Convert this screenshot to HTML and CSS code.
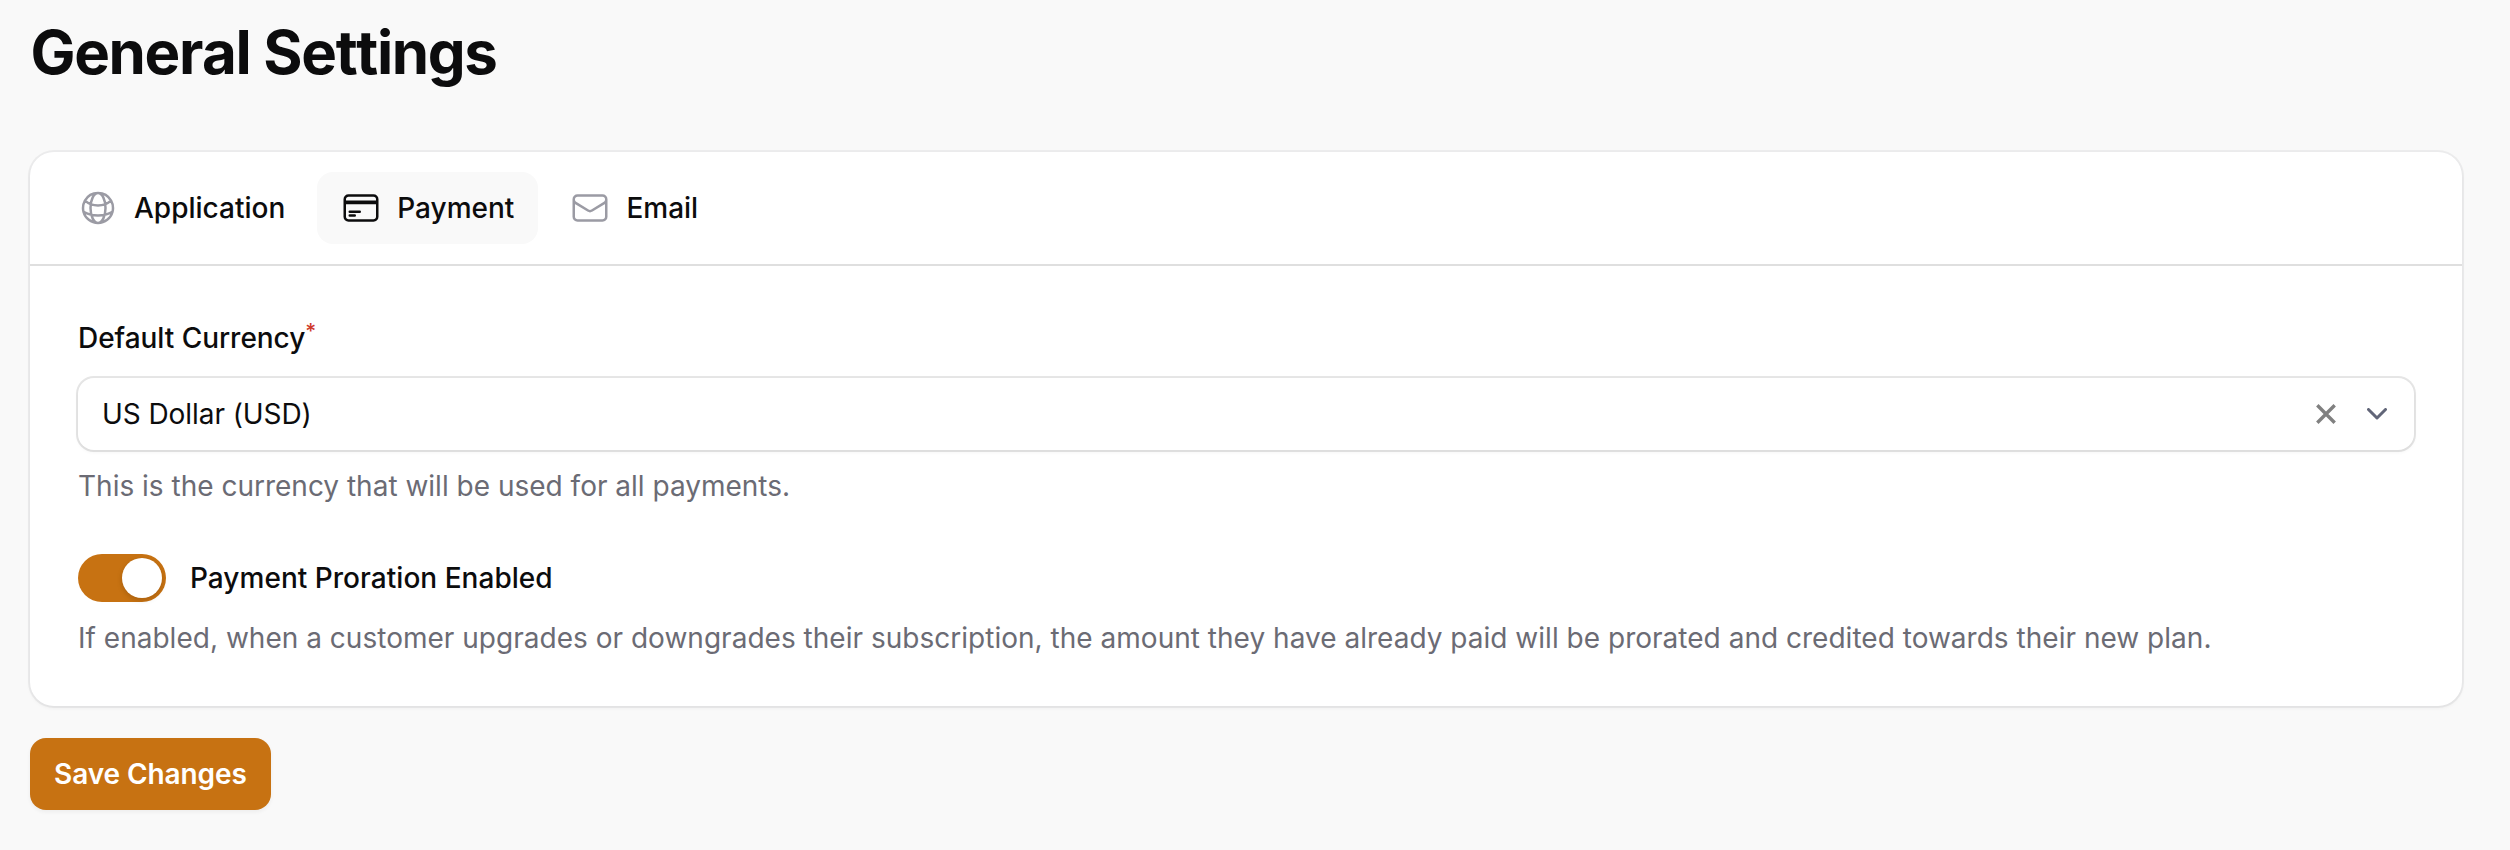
FILE: index.html
```html
<!DOCTYPE html>
<html lang="en">
<head>
<meta charset="utf-8">
<title>General Settings</title>
<link rel="stylesheet" href="styles.css">
</head>
<body>
<main class="page">
  <h1 class="page-title">General Settings</h1>
  <section class="card">
    <nav class="tabs">
      <a class="tab">
        <svg class="tab-icon" viewBox="0 0 24 24"><path d="M12 21a9.004 9.004 0 0 0 8.716-6.747M12 21a9.004 9.004 0 0 1-8.716-6.747M12 21c2.485 0 4.5-4.03 4.5-9S14.485 3 12 3m0 18c-2.485 0-4.5-4.03-4.5-9S9.515 3 12 3m0 0a8.997 8.997 0 0 1 7.843 4.582M12 3a8.997 8.997 0 0 0-7.843 4.582m15.686 0A11.953 11.953 0 0 1 12 10.5c-2.998 0-5.74-1.1-7.843-2.918m15.686 0A8.959 8.959 0 0 1 21 12c0 .778-.099 1.533-.284 2.253m0 0A17.919 17.919 0 0 1 12 16.5c-3.162 0-6.133-.815-8.716-2.247m0 0A9.015 9.015 0 0 1 3 12c0-1.605.42-3.113 1.157-4.418"/></svg>
        <span>Application</span>
      </a>
      <a class="tab tab-active">
        <svg class="tab-icon" viewBox="0 0 24 24"><path d="M2.25 8.25h19.5M2.25 9h19.5m-16.5 5.25h6m-6 2.25h3m-3.75 3h15a2.25 2.25 0 0 0 2.25-2.25V6.75A2.25 2.25 0 0 0 19.5 4.5h-15a2.25 2.25 0 0 0-2.25 2.25v10.5A2.25 2.25 0 0 0 4.5 19.5Z"/></svg>
        <span>Payment</span>
      </a>
      <a class="tab">
        <svg class="tab-icon" viewBox="0 0 24 24"><path d="M21.75 6.75v10.5a2.25 2.25 0 0 1-2.25 2.25h-15a2.25 2.25 0 0 1-2.25-2.25V6.75m19.5 0A2.25 2.25 0 0 0 19.5 4.5h-15a2.25 2.25 0 0 0-2.25 2.25m19.5 0v.243a2.25 2.25 0 0 1-1.07 1.916l-7.5 4.615a2.25 2.25 0 0 1-2.36 0L3.32 8.91a2.25 2.25 0 0 1-1.07-1.916V6.75"/></svg>
        <span>Email</span>
      </a>
    </nav>
    <div class="panel">
      <div class="field">
        <div class="label"><span>Default Currency</span><sup class="required">*</sup></div>
        <div class="select">
          <span class="select-value">US Dollar (USD)</span>
          <svg class="clear" viewBox="0 0 20 20"><path d="M1.3 1.3 18.7 18.7M18.7 1.3 1.3 18.7"/></svg>
          <svg class="chevron" viewBox="0 0 20 12"><path d="M1.5 1.5 10 10l8.500-8.500"/></svg>
        </div>
        <p class="help">This is the currency that will be used for all payments.</p>
      </div>
      <div class="field">
        <div class="toggle-row">
          <span class="toggle"><span class="knob"></span></span>
          <span>Payment Proration Enabled</span>
        </div>
        <p class="help help-long">If enabled, when a customer upgrades or downgrades their subscription, the amount they have already paid will be prorated and credited towards their new plan.</p>
      </div>
    </div>
  </section>
  <button class="save" type="button">Save Changes</button>
</main>
</body>
</html>
```
FILE: styles.css
```css
* { box-sizing: border-box; }
body {
  margin: 0;
  background: #f9f9f9;
  color: #0c0c0d;
  font-family: Inter, "Liberation Sans", sans-serif;
  font-size: 28px;
  line-height: 40px;
}
.page {
  display: flex;
  flex-direction: column;
  align-items: flex-start;
  padding: 16px 48px 40px 30px;
}
.page-title {
  margin: 0 0 64px;
  padding-left: .5px;
  font-size: 60px;
  line-height: 72px;
  font-weight: 700;
  letter-spacing: -1.35px;
  font-kerning: none;
}
.card {
  width: 100%;
  background: #fff;
  border-radius: 24px;
  box-shadow: 0 0 0 2px rgba(9, 9, 11, .05), 0 2px 4px rgba(0, 0, 0, .05);
}
.tabs {
  display: flex;
  gap: 8px;
  padding: 20px 24px;
  border-bottom: 2px solid #dfdfdf;
}
.tab {
  display: flex;
  align-items: center;
  gap: 16px;
  padding: 16px 24px;
  border-radius: 16px;
  font-weight: 500;
}
.tab-active { background: #f9f9f9; }
.tab-icon {
  width: 40px;
  height: 40px;
  fill: none;
  stroke: #9b9ba4;
  stroke-width: 1.5;
  stroke-linecap: round;
  stroke-linejoin: round;
}
.tab-active .tab-icon { stroke: #0c0c0d; }
.panel {
  display: flex;
  flex-direction: column;
  gap: 48px;
  padding: 48px;
}
.field {
  display: flex;
  flex-direction: column;
  gap: 16px;
}
.label {
  display: flex;
  height: 48px;
  line-height: 48px;
  font-weight: 500;
  letter-spacing: -.04px;
}
.required {
  color: #cf3a2c;
  font-size: 21px;
  line-height: 36px;
}
.select {
  display: flex;
  align-items: center;
  height: 72px;
  padding: 0 27px 0 24px;
  border-radius: 16px;
  box-shadow: 0 0 0 2px rgba(9, 9, 11, .1), 0 2px 4px rgba(0, 0, 0, .05);
}
.select-value {
  flex: 1;
  letter-spacing: -.07px;
}
.clear {
  width: 20px;
  height: 20px;
  margin-right: 31px;
  fill: none;
  stroke: #808080;
  stroke-width: 3.4;
}
.chevron {
  width: 20px;
  height: 12px;
  fill: none;
  stroke: #616578;
  stroke-width: 3;
  stroke-linecap: round;
  stroke-linejoin: round;
}
.help {
  margin: 0;
  color: #6b6b74;
}
.help-long { letter-spacing: .018px; }
.toggle-row {
  display: flex;
  align-items: center;
  gap: 24px;
  line-height: 48px;
  font-weight: 500;
  letter-spacing: .03px;
}
.toggle {
  display: flex;
  justify-content: flex-end;
  width: 88px;
  height: 48px;
  padding: 4px;
  border-radius: 24px;
  background: #c77212;
}
.knob {
  width: 40px;
  height: 40px;
  border-radius: 50%;
  background: #fff;
  box-shadow: 0 2px 6px rgba(0, 0, 0, .1), 0 2px 4px rgba(0, 0, 0, .06);
}
.save {
  height: 72px;
  margin-top: 32px;
  padding: 0 24px;
  border: 0;
  border-radius: 16px;
  background: #c77212;
  color: #fff;
  font: 600 28px/40px Inter, "Liberation Sans", sans-serif;
  letter-spacing: -.08px;
  box-shadow: 0 2px 4px rgba(0, 0, 0, .05);
}
```
